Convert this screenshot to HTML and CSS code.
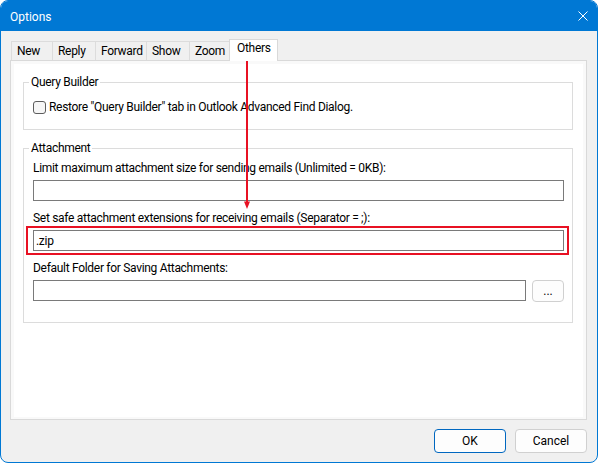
FILE: index.html
```html
<!DOCTYPE html>
<html lang="en">
<head>
  <meta charset="UTF-8">
  <title>Options</title>
  <link rel="stylesheet" href="styles.css">
</head>
<body>
  <div class="window">
    <!-- Title bar -->
    <div class="titlebar">
      <span class="title">Options</span>
      <svg class="close" width="10" height="10" viewBox="0 0 10 10">
        <path d="M0.5 0.5 L9.5 9.5 M9.5 0.5 L0.5 9.5" stroke="#fff" stroke-width="1" fill="none"/>
      </svg>
    </div>

    <div class="dialog-body">
      <!-- Tabs -->
      <ul class="tabs">
        <li>New</li>
        <li>Reply</li>
        <li>Forward</li>
        <li>Show</li>
        <li>Zoom</li>
        <li class="active">Others</li>
      </ul>

      <div class="tab-panel">
        <div class="panel-inner">
          <fieldset class="group group-query">
            <legend>Query Builder</legend>
            <label class="check"><span class="box"></span>Restore "Query Builder" tab in Outlook Advanced Find Dialog.</label>
          </fieldset>

          <fieldset class="group group-attach">
            <legend>Attachment</legend>
            <div class="field">
              <label>Limit maximum attachment size for sending emails (Unlimited = 0KB):</label>
              <input type="text" class="textbox">
            </div>
            <div class="field">
              <label>Set safe attachment extensions for receiving emails (Separator = ;):</label>
              <div class="marked">
                <input type="text" class="textbox" value=".zip">
              </div>
            </div>
            <div class="field">
              <label>Default Folder for Saving Attachments:</label>
              <div class="row">
                <input type="text" class="textbox">
                <button class="browse-btn">...</button>
              </div>
            </div>
          </fieldset>
        </div>
      </div>

      <!-- Dialog buttons -->
      <div class="footer">
        <button class="btn btn-default">OK</button>
        <button class="btn">Cancel</button>
      </div>
    </div>

    <!-- Pointer from the tab to the extensions box -->
    <svg class="pointer" width="14" height="160" viewBox="0 0 14 160">
      <line x1="7" y1="2" x2="7" y2="148" stroke="#e81123" stroke-width="2"/>
      <polygon points="4,146.5 10,146.5 7,154" fill="#e81123"/>
    </svg>
  </div>
</body>
</html>
```

FILE: styles.css
```css
* {
  margin: 0;
  padding: 0;
  box-sizing: border-box;
}
body {
  font-family: Roboto, "Segoe UI", sans-serif;
  font-size: 12px;
  line-height: 16px;
  letter-spacing: -0.3px;
  color: #000;
  background: #fff;
}
/* Window frame */
.window {
  position: relative;
  width: 598px;
  height: 463px;
  border: 1px solid #0078d4;
  border-radius: 8px;
  overflow: hidden;
  background: #f0f0f0;
  display: flex;
  flex-direction: column;
}
.titlebar {
  height: 30px;
  background: #0078d4;
  color: #fff;
  display: flex;
  align-items: center;
  justify-content: space-between;
  padding: 0 9px 0 9px;
}
.title {
  font-size: 12px;
  letter-spacing: 0;
  margin-top: 1px;
}
.close {
  display: block;
}
.dialog-body {
  flex: 1;
  display: flex;
  flex-direction: column;
  padding: 8px 10px 0 9px;
}
/* Tabs */
.tabs {
  list-style: none;
  display: flex;
  align-items: flex-end;
  height: 21px;
  padding-left: 1px;
}
.tabs li {
  height: 19px;
  border: 1px solid #dcdcdc;
  border-bottom: none;
  margin-right: -1px;
  padding: 1px 0 0 5px;
  background: #f0f0f0;
  white-space: nowrap;
}
.tabs li:nth-child(1) { width: 42px; }
.tabs li:nth-child(2) { width: 44px; }
.tabs li:nth-child(3) { width: 52px; }
.tabs li:nth-child(4) { width: 44px; }
.tabs li:nth-child(5) { width: 41px; }
.tabs li.active {
  width: 49px;
  height: 22px;
  margin-bottom: -1px;
  padding: 0 0 0 7px;
  background: #fff;
  border-color: #d9d9d9;
  position: relative;
  z-index: 1;
}
.tab-panel {
  flex: 1;
  border: 1px solid #d9d9d9;
  background: #f9f9f9;
  padding: 3px 3px 2px 3px;
  display: flex;
}
.panel-inner {
  flex: 1;
  background: #fff;
  padding: 10px 10px 0 9px;
}
/* Group boxes */
.group {
  border: 1px solid #dcdcdc;
  padding: 0 8px 0 9px;
  min-width: 0;
}
.group legend {
  margin-left: -4px;
  padding: 0 2px;
  line-height: 16px;
}
.group-query {
  padding-top: 9px;
  padding-bottom: 14px;
}
.group-attach {
  margin-top: 10px;
  padding-top: 4px;
  padding-bottom: 20px;
}
.check {
  display: flex;
  align-items: center;
}
.check .box {
  width: 13px;
  height: 13px;
  border: 1px solid #5d5d5d;
  border-radius: 3px;
  background: #f6f6f6;
  margin-right: 3px;
}
.field {
  margin-bottom: 9px;
}
.field:last-child {
  margin-bottom: 0;
}
.field label {
  display: block;
  margin-bottom: 4px;
}
.textbox {
  display: block;
  width: 100%;
  height: 21px;
  border: 1px solid #7a7a7a;
  background: #fff;
  font: inherit;
  letter-spacing: inherit;
  padding: 0 2px;
  outline: none;
}
.marked {
  position: relative;
}
.marked::after {
  content: "";
  position: absolute;
  left: -7px;
  right: -5px;
  top: -4px;
  bottom: -4px;
  border: 2px solid #e81123;
  pointer-events: none;
}
.row {
  display: flex;
  gap: 6px;
}
.row .textbox {
  flex: 1;
}
.browse-btn {
  width: 32px;
  height: 22px;
  border: 1px solid #d0d0d0;
  border-radius: 4px;
  background: #fdfdfd;
  font: inherit;
  line-height: 14px;
  color: #000;
}
/* Footer buttons */
.footer {
  display: flex;
  justify-content: flex-end;
  gap: 9px;
  padding: 9px 0 9px 0;
}
.btn {
  width: 72px;
  height: 24px;
  border: 1px solid #d0d0d0;
  border-radius: 4px;
  background: #fdfdfd;
  font: inherit;
  color: #000;
}
.btn-default {
  border-color: #0067c0;
}
.pointer {
  position: absolute;
  left: 239px;
  top: 54px;
}
```
